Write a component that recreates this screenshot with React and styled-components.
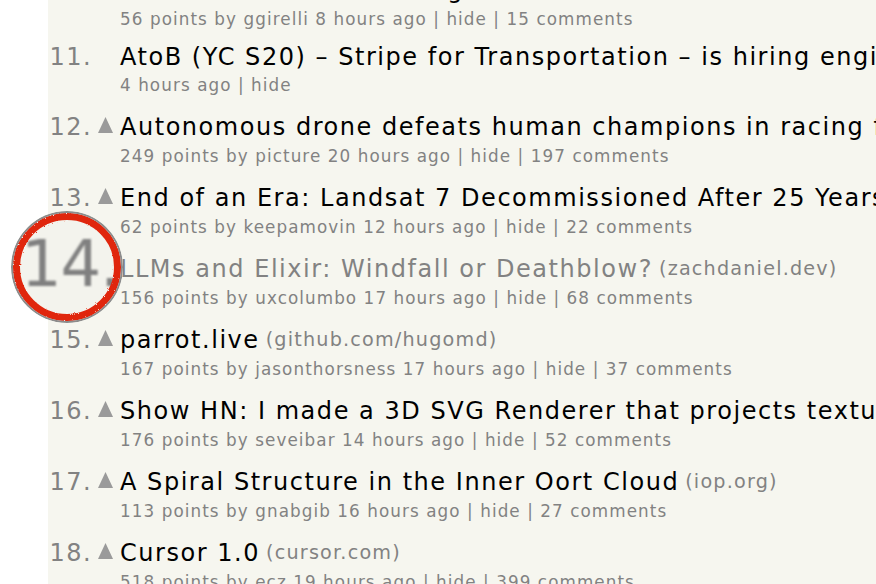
import React from 'react';
import styled, { createGlobalStyle } from 'styled-components';

const GlobalStyle = createGlobalStyle`
  html, body {
    margin: 0;
    padding: 0;
    background: #ffffff;
    overflow: hidden;
  }
  body {
    font-family: "DejaVu Sans", Verdana, sans-serif;
  }
`;

const Page = styled.div`
  width: 876px;
  height: 584px;
  overflow: hidden;
  padding-left: 48px;
  box-sizing: border-box;
`;

const Board = styled.div`
  display: flow-root;
  position: relative;
  background: #f6f6ef;
  height: 100%;
`;

const List = styled.ol`
  list-style: none;
  margin: -40px 0 0 0;
  padding: 0;
`;

const Item = styled.li`
  padding-top: ${(p) => (p.$job ? '11px' : '14.5px')};
`;

const TitleLine = styled.div`
  display: flex;
  align-items: center;
  height: 30px;
  white-space: nowrap;
`;

const Rank = styled.span`
  width: 44px;
  text-align: right;
  font-size: 24px;
  letter-spacing: 0.06em;
  color: #828282;
  flex-shrink: 0;
`;

const Vote = styled.span`
  width: 15px;
  height: 16px;
  margin: 0 7px 4px 6px;
  flex-shrink: 0;
  display: flex;
`;

const Title = styled.a`
  font-size: 24px;
  letter-spacing: 0.064em;
  color: ${(p) => (p.$visited ? '#828282' : '#000000')};
  text-decoration: none;
`;

const Domain = styled.span`
  font-size: 19.2px;
  letter-spacing: 0.062em;
  color: #828282;
  margin-left: 6px;
`;

const SubLine = styled.div`
  margin-top: ${(p) => (p.$job ? '1px' : '2.5px')};
  padding-left: 72px;
  height: 24px;
  line-height: 24px;
  font-size: 16.8px;
  letter-spacing: 0.064em;
  color: #828282;
  white-space: nowrap;
`;

const Lens = styled.div`
  position: absolute;
  left: -37px;
  top: 211px;
  width: 112px;
  height: 112px;
  border-radius: 50%;
  background: #f3f3ed;
  overflow: hidden;
`;

const LensText = styled.span`
  position: absolute;
  left: 10px;
  top: 20px;
  font-size: 64px;
  line-height: 66px;
  letter-spacing: -0.02em;
  color: #808080;
  filter: blur(0.8px);
  white-space: nowrap;
`;

const Ring = styled.svg`
  position: absolute;
  left: 0;
  top: 0;
  width: 112px;
  height: 112px;
`;

const stories = [
  { rank: 10, title: 'The Art of Manual Testing', meta: '56 points by ggirelli 8 hours ago | hide | 15 comments' },
  { rank: 11, job: true, title: 'AtoB (YC S20) – Stripe for Transportation – is hiring engineers', meta: '4 hours ago | hide' },
  { rank: 12, title: 'Autonomous drone defeats human champions in racing first', meta: '249 points by picture 20 hours ago | hide | 197 comments' },
  { rank: 13, title: 'End of an Era: Landsat 7 Decommissioned After 25 Years', meta: '62 points by keepamovin 12 hours ago | hide | 22 comments' },
  { rank: 14, visited: true, title: 'LLMs and Elixir: Windfall or Deathblow?', domain: 'zachdaniel.dev', meta: '156 points by uxcolumbo 17 hours ago | hide | 68 comments' },
  { rank: 15, title: 'parrot.live', domain: 'github.com/hugomd', meta: '167 points by jasonthorsness 17 hours ago | hide | 37 comments' },
  { rank: 16, title: 'Show HN: I made a 3D SVG Renderer that projects textures without rasterization', meta: '176 points by seveibar 14 hours ago | hide | 52 comments' },
  { rank: 17, title: 'A Spiral Structure in the Inner Oort Cloud', domain: 'iop.org', meta: '113 points by gnabgib 16 hours ago | hide | 27 comments' },
  { rank: 18, title: 'Cursor 1.0', domain: 'cursor.com', meta: '518 points by ecz 19 hours ago | hide | 399 comments' },
];

function Arrow() {
  return (
    <svg width="15" height="16" viewBox="0 0 15 16">
      <polygon points="7.5,0 15,16 0,16" fill="#9a9a9a" />
    </svg>
  );
}

function Story({ s }) {
  return (
    <Item $job={s.job}>
      <TitleLine>
        <Rank>{s.rank}.</Rank>
        <Vote>{!s.job && <Arrow />}</Vote>
        <Title href="#" $visited={s.visited}>{s.title}</Title>
        {s.domain && <Domain>({s.domain})</Domain>}
      </TitleLine>
      <SubLine $job={s.job}>{s.meta}</SubLine>
    </Item>
  );
}

export default function App() {
  return (
    <>
      <GlobalStyle />
      <Page>
        <Board>
          <List>
            {stories.map((s) => (
              <Story key={s.rank} s={s} />
            ))}
          </List>
          <Lens>
            <LensText>14.</LensText>
            <Ring viewBox="0 0 112 112">
              <defs>
                <filter id="rough" x="-10%" y="-10%" width="120%" height="120%">
                  <feTurbulence type="fractalNoise" baseFrequency="0.9" numOctaves="2" seed="3" />
                  <feDisplacementMap in="SourceGraphic" scale="2.6" />
                </filter>
              </defs>
              <circle cx="56" cy="56" r="50.5" fill="none" stroke="#e0250c" strokeWidth="7" filter="url(#rough)" />
              <circle cx="56" cy="56" r="55" fill="none" stroke="#8c8c8c" strokeWidth="2" />
            </Ring>
          </Lens>
        </Board>
      </Page>
    </>
  );
}
